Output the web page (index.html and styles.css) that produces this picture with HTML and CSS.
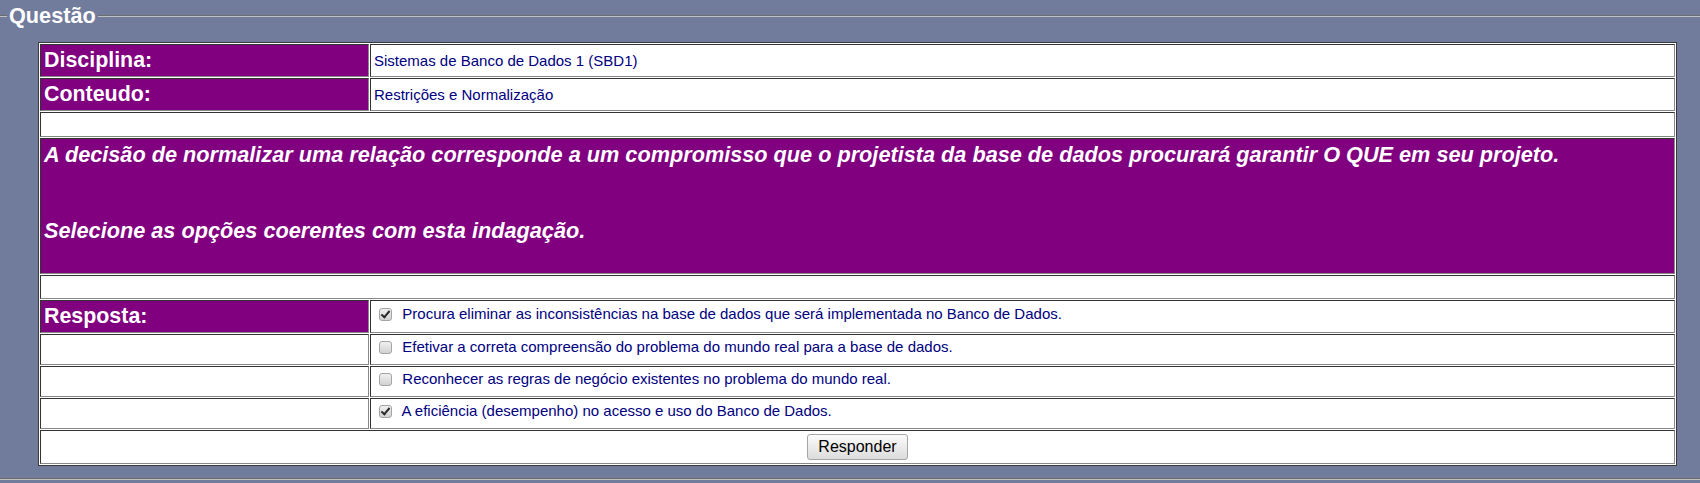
FILE: index.html
```html
<!DOCTYPE html>
<html lang="pt">
<head>
<meta charset="utf-8">
<title>Questão</title>
<link rel="stylesheet" href="styles.css">
</head>
<body>
<fieldset class="box">
  <legend class="title">Questão</legend>
  <div class="inner">
    <table class="q">
      <tr>
        <td class="label">Disciplina:</td>
        <td class="value">Sistemas de Banco de Dados 1 (SBD1)</td>
      </tr>
      <tr>
        <td class="label">Conteudo:</td>
        <td class="value">Restrições e Normalização</td>
      </tr>
      <tr>
        <td class="blank" colspan="2">&nbsp;</td>
      </tr>
      <tr>
        <td class="stmt" colspan="2">A decisão de normalizar uma relação corresponde a um compromisso que o projetista da base de dados procurará garantir O QUE em seu projeto.<br><br><br>Selecione as opções coerentes com esta indagação.<br><br></td>
      </tr>
      <tr>
        <td class="blank short" colspan="2">&nbsp;</td>
      </tr>
      <tr>
        <td class="label">Resposta:</td>
        <td class="value opt first"><input type="checkbox" class="chk" checked disabled>&nbsp; Procura eliminar as inconsistências na base de dados que será implementada no Banco de Dados.</td>
      </tr>
      <tr>
        <td class="empty"></td>
        <td class="value opt"><input type="checkbox" class="chk" disabled>&nbsp; Efetivar a correta compreensão do problema do mundo real para a base de dados.</td>
      </tr>
      <tr>
        <td class="empty"></td>
        <td class="value opt"><input type="checkbox" class="chk" disabled>&nbsp; Reconhecer as regras de negócio existentes no problema do mundo real.</td>
      </tr>
      <tr>
        <td class="empty"></td>
        <td class="value opt"><input type="checkbox" class="chk" checked disabled>&nbsp; A eficiência (desempenho) no acesso e uso do Banco de Dados.</td>
      </tr>
      <tr>
        <td class="actions" colspan="2"><button type="button" class="btn">Responder</button></td>
      </tr>
    </table>
  </div>
</fieldset>
</body>
</html>
```

FILE: styles.css
```css
html, body {
  margin: 0;
  padding: 0;
}

body {
  background: #717b9c;
  font-family: "Liberation Sans", Arial, sans-serif;
  height: 483px;
  overflow: hidden;
}

.box {
  margin: 3px -2px 0 -2px;
  padding: 0 23px 12px 7px;
  border: 2px groove #c0c0c0;
  min-width: 0;
}

.title {
  padding: 0 2px;
  font-size: 21.7px;
  line-height: 25.6px;
  font-weight: bold;
  color: #ffffff;
}

.inner {
  padding: 13px 0 0 31px;
}

.q {
  width: 100%;
  border-collapse: separate;
  border-spacing: 1px;
  border: 1px solid #3a3a3a;
  background: #ffffff;
}

.q td {
  padding: 3px;
  border: 1px solid;
  border-color: #333333 #888888 #888888 #333333;
  vertical-align: middle;
}

.label {
  width: 329px;
  box-sizing: border-box;
  background: #800080;
  color: #ffffff;
  font-size: 21.4px;
  line-height: 25px;
  font-weight: bold;
}

.value {
  background: #ffffff;
  color: #000080;
  font-size: 15px;
  line-height: 17px;
}

.q td.opt {
  vertical-align: top;
  height: 31px;
  box-sizing: border-box;
}

.q td.opt.first {
  padding-top: 4px;
}

.empty {
  background: #ffffff;
}

.blank {
  background: #ffffff;
  font-size: 15px;
  line-height: 17px;
}

.q td.short {
  height: 24px;
  box-sizing: border-box;
  line-height: 16px;
}

.stmt {
  background: #800080;
  color: #ffffff;
  font-size: 21.7px;
  line-height: 25.6px;
  font-weight: bold;
  font-style: italic;
}

.chk {
  -webkit-appearance: none;
  appearance: none;
  position: relative;
  width: 13px;
  height: 13px;
  margin: 3px 2px 3px 5px;
  box-sizing: border-box;
  border: 1px solid #a4a4a4;
  border-radius: 3px;
  background: linear-gradient(#f0f0f0, #d2d2d2);
  vertical-align: middle;
}

.chk:checked::after {
  content: "";
  position: absolute;
  left: 3px;
  top: 0px;
  width: 3px;
  height: 7px;
  border: solid #2a2a2a;
  border-width: 0 2px 2px 0;
  transform: rotate(40deg);
}

.actions {
  background: #ffffff;
  text-align: center;
}

.btn {
  font-family: "Liberation Sans", Arial, sans-serif;
  font-size: 16px;
  line-height: 18px;
  color: #000000;
  padding: 3px 10px;
  border: 1px solid #a6a6a6;
  border-radius: 3px;
  background: linear-gradient(#fbfbfb, #dcdcdc);
  margin: 0;
}
```
